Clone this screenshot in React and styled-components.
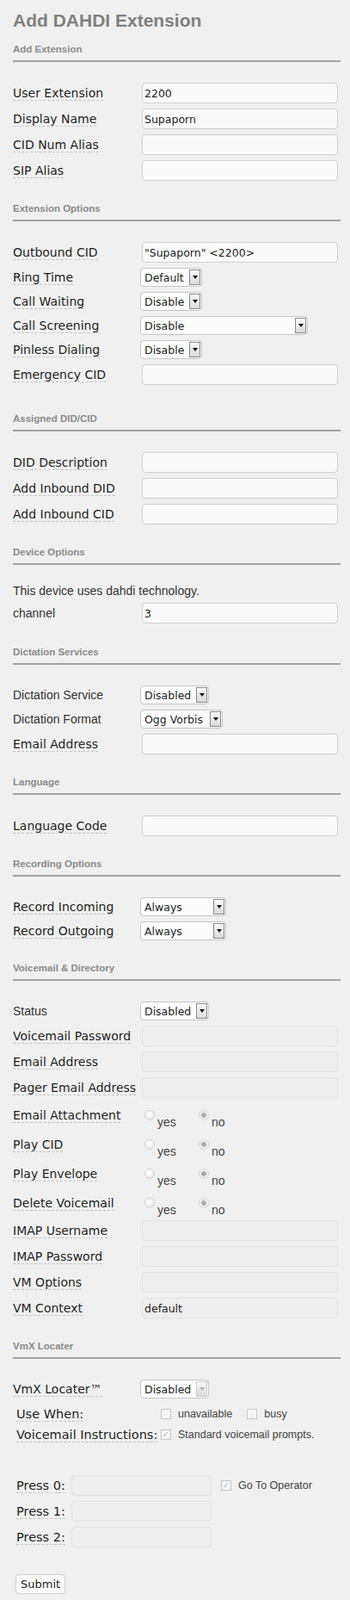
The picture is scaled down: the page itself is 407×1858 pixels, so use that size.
import React from 'react';
import styled, { createGlobalStyle } from 'styled-components';

const GlobalStyle = createGlobalStyle`
  html, body {
    margin: 0;
    padding: 0;
    background: #f0f0f0;
  }
  * {
    box-sizing: border-box;
  }
`;

const Page = styled.form`
  padding: 12px 11px 8px 15px;
  font-family: "DejaVu Sans", Verdana, sans-serif;
  color: #222;
`;

const Title = styled.h2`
  margin: 0;
  font: 700 21px/24px "Liberation Sans", Arial, sans-serif;
  color: #808080;
`;

const Section = styled.section`
  margin-top: ${props => props.$gap || 25}px;
`;

const SectionHeader = styled.div`
  font: 700 11.5px/14px "Liberation Sans", Arial, sans-serif;
  color: #8a8a8a;
  padding-bottom: 6px;
  border-bottom: 2px solid #a2a2a2;
`;

const Rows = styled.div`
  display: flex;
  flex-direction: column;
  gap: 6px;
  margin-top: ${props => props.$top || 24}px;
  padding-right: 3px;
`;

const Row = styled.div`
  display: flex;
  align-items: center;
  min-height: ${props => props.$h || 22}px;
`;

const Label = styled.div`
  flex: none;
  width: 148px;
  font-size: 14px;
  line-height: 17px;
  color: #1e1e1e;
  white-space: nowrap;
`;

const LabelText = styled.span`
  border-bottom: 1px dashed #c4c4c4;
`;

const PlainLabel = styled.div`
  flex: none;
  width: 148px;
  font: 14px/17px "Liberation Sans", Arial, sans-serif;
  color: #333;
`;

const Note = styled.div`
  font: 14px/16px "Liberation Sans", Arial, sans-serif;
  color: #333;
`;

const TextInput = styled.input`
  flex: 1;
  min-width: 0;
  height: 24px;
  margin: 0 0 0 2px;
  padding: 0 2px;
  border: 1px solid ${props => (props.disabled ? '#e2e2e2' : '#d0d0d0')};
  border-radius: 4px;
  background: ${props => (props.disabled ? '#efefef' : '#fafafa')};
  font: 12.5px "DejaVu Sans", Verdana, sans-serif;
  color: #1e1e1e;
  outline: none;
`;

const SelectBox = styled.div`
  display: inline-flex;
  align-items: center;
  justify-content: space-between;
  width: ${props => props.$w}px;
  height: 22px;
  padding: 0 1px 0 4px;
  border: 1px solid #c6c6c6;
  border-radius: 4px;
  background: #fcfcfc;
  font-size: 12.5px;
  color: #1e1e1e;
  white-space: nowrap;
`;

const SelectArrow = styled.span`
  display: flex;
  align-items: center;
  justify-content: center;
  flex: none;
  width: 13px;
  height: 18px;
  border: 1px solid ${props => (props.$disabled ? '#cfcfcf' : '#8c8c8c')};
  background: linear-gradient(#f8f8f8, #dadada);

  &::after {
    content: "";
    border-left: 3.5px solid transparent;
    border-right: 3.5px solid transparent;
    border-top: 4px solid ${props => (props.$disabled ? '#b0b0b0' : '#111')};
  }
`;

const Select = ({ value, width, disabled }) => (
  <SelectBox $w={width}>
    <span>{value}</span>
    <SelectArrow $disabled={disabled} />
  </SelectBox>
);

const RadioGroup = styled.div`
  display: flex;
  align-self: stretch;
  height: 28px;
  margin-left: 5px;
`;

const RadioOption = styled.label`
  display: flex;
  align-items: flex-start;
  width: 63px;
  padding-top: 8px;
`;

const RadioDot = styled.span`
  flex: none;
  width: 12px;
  height: 12px;
  border-radius: 50%;
  border: 1px solid #d4d4d4;
  background: ${props =>
    props.$checked
      ? 'radial-gradient(circle, #a9a9a9 0 2.5px, #e4e4e4 3px, #f7f7f7 5px)'
      : 'radial-gradient(circle at 40% 35%, #ffffff, #e6e6e6)'};
`;

const RadioText = styled.span`
  margin: 6px 0 0 3px;
  font: 14px/16px "Liberation Sans", Arial, sans-serif;
  color: #444;
`;

const Radio = ({ checked, children }) => (
  <RadioOption>
    <RadioDot $checked={checked} />
    <RadioText>{children}</RadioText>
  </RadioOption>
);

const VmxGrid = styled.div`
  display: grid;
  grid-template-columns: 164px 1fr;
  grid-auto-rows: 24px;
  align-items: center;
  margin-top: 6px;
  padding-left: 4px;
`;

const BigLabel = styled.div`
  font-size: 14.5px;
  line-height: 18px;
  color: #1e1e1e;
  white-space: nowrap;
`;

const CheckGroup = styled.div`
  display: flex;
  align-items: center;
  padding-left: 4px;
`;

const CheckBox = styled.span`
  display: inline-flex;
  align-items: center;
  justify-content: center;
  flex: none;
  width: 12px;
  height: 12px;
  border: 1px solid #c8c8c8;
  background: #f6f6f6;
  font-size: 10px;
  line-height: 1;
  color: #b8b8b8;
`;

const CheckText = styled.span`
  margin: 0 17px 0 8px;
  font: 12.5px/16px "Liberation Sans", Arial, sans-serif;
  color: #444;
`;

const Check = ({ checked, children }) => (
  <>
    <CheckBox>{checked ? '✓' : ''}</CheckBox>
    <CheckText>{children}</CheckText>
  </>
);

const PressList = styled.div`
  display: flex;
  flex-direction: column;
  gap: 6px;
  margin-top: 35px;
  padding-left: 4px;
`;

const PressRow = styled.div`
  display: flex;
  align-items: center;
  height: 24px;
`;

const PressLabel = styled(BigLabel)`
  width: 62px;
`;

const PressInput = styled(TextInput)`
  flex: none;
  width: 163px;
`;

const OperatorCheck = styled.div`
  display: flex;
  align-items: center;
  margin-left: 11px;
`;

const SubmitButton = styled.button`
  margin: 31px 0 0 3px;
  height: 23px;
  padding: 0 5px;
  border: 1px solid #cfcfcf;
  border-radius: 4px;
  background: #fcfcfc;
  font: 13px "DejaVu Sans", Verdana, sans-serif;
  color: #222;
`;

const Field = ({ label, value, disabled }) => (
  <Row>
    <Label><LabelText>{label}</LabelText></Label>
    <TextInput defaultValue={value} disabled={disabled} />
  </Row>
);

const SelectField = ({ label, value, width, plain, disabled }) => (
  <Row>
    {plain ? <PlainLabel>{label}</PlainLabel> : <Label><LabelText>{label}</LabelText></Label>}
    <Select value={value} width={width} disabled={disabled} />
  </Row>
);

const RadioField = ({ label }) => (
  <Row $h={28}>
    <Label><LabelText>{label}</LabelText></Label>
    <RadioGroup>
      <Radio>yes</Radio>
      <Radio checked>no</Radio>
    </RadioGroup>
  </Row>
);

export default function App() {
  return (
    <>
      <GlobalStyle />
      <Page onSubmit={e => e.preventDefault()}>
        <Title>Add DAHDI Extension</Title>

        <Section $gap={14}>
          <SectionHeader>Add Extension</SectionHeader>
          <Rows>
            <Field label="User Extension" value="2200" />
            <Field label="Display Name" value="Supaporn" />
            <Field label="CID Num Alias" />
            <Field label="SIP Alias" />
          </Rows>
        </Section>

        <Section>
          <SectionHeader>Extension Options</SectionHeader>
          <Rows>
            <Field label="Outbound CID" value={'"Supaporn" <2200>'} />
            <SelectField label="Ring Time" value="Default" width={72} />
            <SelectField label="Call Waiting" value="Disable" width={72} />
            <SelectField label="Call Screening" value="Disable" width={195} />
            <SelectField label="Pinless Dialing" value="Disable" width={72} />
            <Field label="Emergency CID" />
          </Rows>
        </Section>

        <Section $gap={32}>
          <SectionHeader>Assigned DID/CID</SectionHeader>
          <Rows>
            <Field label="DID Description" />
            <Field label="Add Inbound DID" />
            <Field label="Add Inbound CID" />
          </Rows>
        </Section>

        <Section>
          <SectionHeader>Device Options</SectionHeader>
          <Rows $top={22}>
            <Note>This device uses dahdi technology.</Note>
            <Row>
              <PlainLabel>channel</PlainLabel>
              <TextInput defaultValue="3" />
            </Row>
          </Rows>
        </Section>

        <Section $gap={26}>
          <SectionHeader>Dictation Services</SectionHeader>
          <Rows>
            <SelectField plain label="Dictation Service" value="Disabled" width={80} />
            <SelectField plain label="Dictation Format" value="Ogg Vorbis" width={96} />
            <Field label="Email Address" />
          </Rows>
        </Section>

        <Section>
          <SectionHeader>Language</SectionHeader>
          <Rows>
            <Field label="Language Code" />
          </Rows>
        </Section>

        <Section>
          <SectionHeader>Recording Options</SectionHeader>
          <Rows>
            <SelectField label="Record Incoming" value="Always" width={100} />
            <SelectField label="Record Outgoing" value="Always" width={100} />
          </Rows>
        </Section>

        <Section>
          <SectionHeader>Voicemail &amp; Directory</SectionHeader>
          <Rows>
            <SelectField plain label="Status" value="Disabled" width={80} />
            <Field label="Voicemail Password" disabled />
            <Field label="Email Address" disabled />
            <Field label="Pager Email Address" disabled />
            <RadioField label="Email Attachment" />
            <RadioField label="Play CID" />
            <RadioField label="Play Envelope" />
            <RadioField label="Delete Voicemail" />
            <Field label="IMAP Username" disabled />
            <Field label="IMAP Password" disabled />
            <Field label="VM Options" disabled />
            <Field label="VM Context" value="default" disabled />
          </Rows>
        </Section>

        <Section>
          <SectionHeader>VmX Locater</SectionHeader>
          <Rows>
            <SelectField label="VmX Locater™" value="Disabled" width={80} disabled />
          </Rows>
          <VmxGrid>
            <BigLabel><LabelText>Use When:</LabelText></BigLabel>
            <CheckGroup>
              <Check>unavailable</Check>
              <Check>busy</Check>
            </CheckGroup>
            <BigLabel><LabelText>Voicemail Instructions:</LabelText></BigLabel>
            <CheckGroup>
              <Check checked>Standard voicemail prompts.</Check>
            </CheckGroup>
          </VmxGrid>
          <PressList>
            {[0, 1, 2].map(n => (
              <PressRow key={n}>
                <PressLabel><LabelText>Press {n}:</LabelText></PressLabel>
                <PressInput disabled />
                {n === 0 && (
                  <OperatorCheck>
                    <Check checked>Go To Operator</Check>
                  </OperatorCheck>
                )}
              </PressRow>
            ))}
          </PressList>
        </Section>

        <SubmitButton type="submit">Submit</SubmitButton>
      </Page>
    </>
  );
}
